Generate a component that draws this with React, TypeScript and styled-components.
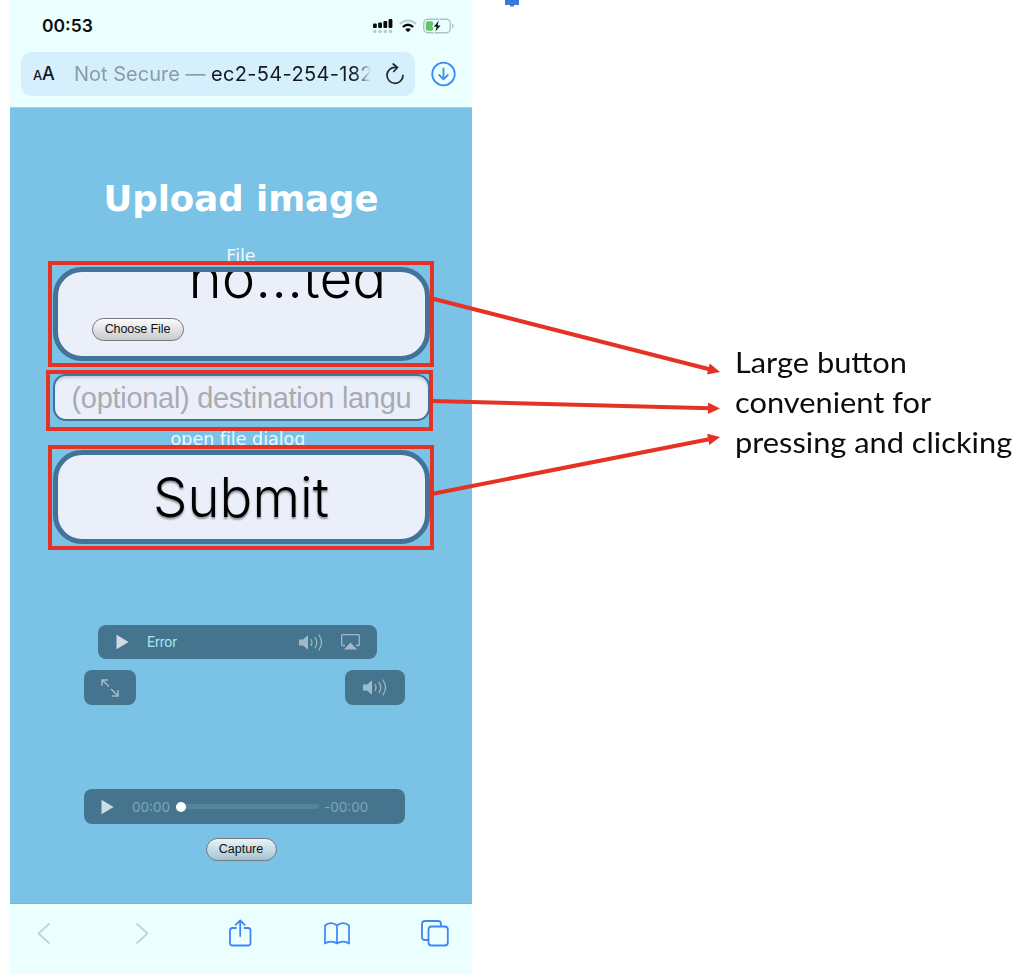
import React from "react";
import styled, { createGlobalStyle } from "styled-components";

const GlobalStyle = createGlobalStyle`
  *, *::before, *::after { box-sizing: border-box; }
  html, body { margin: 0; padding: 0; background: #fff; }
  svg { display: block; flex: none; }
`;

const Slide = styled.main`
  position: relative;
  display: flex;
  width: 1022px;
  height: 974px;
  padding-left: 10px;
  overflow: hidden;
  background: #fff;
  font-family: Inter, "Liberation Sans", sans-serif;
`;

const Phone = styled.section`
  display: flex;
  flex-direction: column;
  flex: none;
  width: 462px;
  height: 974px;
  background: #ebffff;
`;

const StatusBar = styled.div`
  display: flex;
  align-items: center;
  height: 52px;
  padding: 0 18px 0 32px;
`;

const Clock = styled.span`
  flex: 1;
  font: 600 17.5px/20px Inter, sans-serif;
  color: #0b0f10;
`;

const StatusIcons = styled.div`
  display: flex;
  align-items: center;
  gap: 6px;
  margin-top: -1px;
`;

const AddressRow = styled.div`
  display: flex;
  align-items: flex-start;
  height: 56px;
  padding: 0 15px 0 11px;
  border-bottom: 1px solid #a9cfdf;
`;

const AddressPill = styled.div`
  display: flex;
  align-items: center;
  width: 394px;
  height: 44px;
  margin-right: 16px;
  padding: 0 10px 0 12px;
  border-radius: 11px;
  background: #d6effd;
`;

const DownloadButton = styled.span`
  padding-top: 9px;
`;

const TextSize = styled.span`
  width: 41px;
  padding-top: 1px;
  font: 500 18px/24px Inter, sans-serif;
  letter-spacing: -0.2px;
  color: #15191b;
  small { font-size: 13px; }
`;

const Url = styled.span`
  width: 297px;
  margin-right: 14px;
  overflow: hidden;
  white-space: nowrap;
  font: 400 20px/28px Inter, sans-serif;
  letter-spacing: 0.32px;
  color: #15191b;
  -webkit-mask-image: linear-gradient(90deg, #000 calc(100% - 16px), transparent);
  mask-image: linear-gradient(90deg, #000 calc(100% - 16px), transparent);
  em { font-style: normal; letter-spacing: 0; color: #8a9ba4; }
`;

const Page = styled.div`
  display: flex;
  flex-direction: column;
  align-items: center;
  height: 795px;
  padding-top: 69px;
  background: #7ac2e6;
`;

const Title = styled.h1`
  margin: 0 0 24px;
  font: 700 35.5px/44px "DejaVu Sans", sans-serif;
  color: #fff;
`;

const Label = styled.div<{ $top?: number; $shift?: number }>`
  height: 22px;
  margin: ${p => p.$top ?? 0}px ${p => p.$shift ?? 0}px 0 0;
  font: 400 17.5px/22px "DejaVu Sans", sans-serif;
  font-variant-ligatures: none;
  color: #eef8fd;
`;

const Field = styled.div<{ $thin?: boolean }>`
  display: flex;
  width: 377px;
  height: ${p => (p.$thin ? 47 : 94)}px;
  overflow: hidden;
  border: ${p => (p.$thin ? "2px" : "5px")} solid #44739a;
  border-radius: ${p => (p.$thin ? 13 : 29)}px;
  background: #ebeff9;
`;

const FileField = styled(Field)`
  align-items: flex-start;
  padding-left: 34px;
`;

const FileName = styled.span`
  margin: -28px 0 0 5px;
  font: 300 56.5px/68px Inter, "Liberation Sans", sans-serif;
  color: #000;
`;

const LanguageField = styled(Field)`
  align-items: center;
  margin-top: 13px;
  padding-left: 17px;
  box-shadow: inset 0 3px 3px -1px #c3c9d8;
  font: 400 29px/40px "Liberation Sans", sans-serif;
  letter-spacing: -0.3px;
  white-space: nowrap;
  color: #a9abb0;
`;

const SubmitField = styled(Field)`
  align-items: center;
  justify-content: center;
  font: 300 54.5px/70px Inter, "Liberation Sans", sans-serif;
  color: #000;
  text-shadow: 0 2px 2px #0006;
`;

const PillButton = styled.button<{ $width: number; $tint?: boolean }>`
  width: ${p => p.$width}px;
  height: 23px;
  flex: none;
  padding: 0;
  border: 1.5px solid #74787c;
  border-radius: 12px;
  background: ${p => (p.$tint ? "linear-gradient(#e9f4f8, #a5c3d2)" : "linear-gradient(#fbfbfc, #c9cacd)")};
  font: 400 12.5px/19px "Liberation Sans", sans-serif;
  color: #101214;
`;

const ChooseButton = styled(PillButton)`
  margin-top: 46px;
  letter-spacing: -0.1px;
`;

const MediaBar = styled.div<{ $width: number }>`
  display: flex;
  align-items: center;
  width: ${p => p.$width}px;
  height: 35px;
  border-radius: 8px;
  background: #45758e;
  color: #a2b9c6;
`;

const ErrorBar = styled(MediaBar)`
  height: 34px;
  margin: 81px 7px 0 0;
  padding: 0 17px 0 18px;
  gap: 18px;
`;

const ErrorText = styled.span`
  flex: 1;
  font: 400 14px/18px Roboto, sans-serif;
  color: #a6e6ee;
`;

const MediaRow = styled.div`
  display: flex;
  justify-content: space-between;
  width: 321px;
  margin: 11px 0 84px 7px;
`;

const MediaButton = styled(MediaBar)`
  justify-content: center;
`;

const AudioBar = styled(MediaBar)`
  margin: 0 0 14px 7px;
  padding-left: 17px;
`;

const Time = styled.span<{ $gap?: number }>`
  width: 44px;
  margin-left: ${p => p.$gap ?? 0}px;
  font: 400 13.5px/18px Inter, sans-serif;
  color: #83a5b7;
`;

const Track = styled.div`
  display: flex;
  align-items: center;
  width: 143px;
  height: 5px;
  margin-right: 5px;
  border-radius: 3px;
  background: #55839b;
`;

const Knob = styled.i`
  width: 10px;
  height: 10px;
  border-radius: 50%;
  background: #fff;
`;

const Toolbar = styled.nav`
  display: flex;
  align-items: flex-start;
  justify-content: space-between;
  height: 71px;
  padding: 15px 23px 0 20px;
  border-top: 1px solid #79b3d1;
  color: #3e86f5;
`;

const ToolbarItem = styled.span`
  display: flex;
  justify-content: center;
  width: 28px;
`;

const Highlight = styled.div<{ $x: number; $y: number; $w: number; $h: number }>`
  position: absolute;
  left: ${p => p.$x}px;
  top: ${p => p.$y}px;
  width: ${p => p.$w}px;
  height: ${p => p.$h}px;
  border: 4px solid #e63224;
`;

const Arrows = styled.svg`
  position: absolute;
  left: 0;
  top: 0;
`;

const Note = styled.p`
  margin: 342px 0 0 263px;
  font: 400 29px/40px Lato, "Open Sans", sans-serif;
  white-space: nowrap;
  color: #0c0c0c;
`;

const NoteLine = styled.span`
  display: block;
  transform: scaleX(1.062);
  transform-origin: left;
`;

const PlayIcon = () => (
  <svg width="13" height="16" viewBox="0 0 13 16"><path d="M.5 .8 12.6 8 .5 15.2Z" fill="#d0dce4" /></svg>
);

const VolumeIcon = () => (
  <svg width="24" height="17" viewBox="0 0 24 17" fill="none" stroke="currentColor" strokeWidth="1.2" strokeLinecap="round">
    <path d="M0 5.5h4l5-4.3v14.6l-5-4.3H0Z" fill="currentColor" stroke="none" />
    <path d="M12 5.5q2 3 0 6M16 3.3q3.6 5.2 0 10.4M20 1q5 7.500 0 15" />
  </svg>
);

const AirplayIcon = () => (
  <svg width="19" height="16" viewBox="0 0 19 16" fill="none" stroke="currentColor" strokeWidth="1.3">
    <path d="M4 11.500H1.600Q.7 11.500 .7 10.600V1.600Q.7.700 1.600.700H17.400Q18.300.700 18.300 1.600V10.600Q18.300 11.500 17.400 11.500H15" />
    <path d="M9.500 8.500 16 15.500H3Z" fill="currentColor" stroke="none" />
  </svg>
);

const ArrowShape = ({ x1, y1, x2, y2 }: { x1: number; y1: number; x2: number; y2: number }) => {
  const length = Math.hypot(x2 - x1, y2 - y1);
  const angle = (Math.atan2(y2 - y1, x2 - x1) * 180) / Math.PI;
  return (
    <g transform={`translate(${x1} ${y1}) rotate(${angle})`} fill="#e63224">
      <path d={`M-1 -2H${length - 10}V2H-1Z`} />
      <path d={`M${length} 0 L${length - 12} -5.700V5.700Z`} />
    </g>
  );
};

export default function App() {
  return (
    <Slide>
      <GlobalStyle />
      <Phone>
        <StatusBar>
          <Clock>00:53</Clock>
          <StatusIcons>
            <svg width="20" height="16" viewBox="0 0 20 16">
              <g fill="#080b0c">
                <rect x="0" y="5.500" width="3.800" height="4.500" rx="1" />
                <rect x="5.200" y="4.500" width="3.800" height="5.500" rx="1" />
                <rect x="10.400" y="3" width="3.800" height="7" rx="1" />
                <rect x="15.600" y="1" width="3.800" height="9" rx="1" />
              </g>
              <g fill="#b5c9d1">
                <circle cx="1.800" cy="13.400" r="1.700" />
                <circle cx="7" cy="13.400" r="1.700" />
                <circle cx="12.300" cy="13.400" r="1.700" />
                <circle cx="17.500" cy="13.400" r="1.700" />
              </g>
            </svg>
            <svg width="18" height="14" viewBox="0 0 18 14" fill="none" strokeWidth="2.300">
              <path d="M1 4.800Q9-2 17 4.800" stroke="#b8ccd5" />
              <path d="M3.800 8Q9 3.500 14.200 8" stroke="#050708" />
              <path d="M6.200 10.400Q9 8.200 11.800 10.400L9 13.300Z" fill="#050708" />
            </svg>
            <svg width="31" height="16" viewBox="0 0 31 16">
              <rect x=".8" y="1.300" width="26.500" height="13.400" rx="4" fill="none" stroke="#aebfc5" strokeWidth="1.400" />
              <path d="M29 5.500v5q1.700-.8 1.700-2.500T29 5.500Z" fill="#aebfc5" />
              <rect x="2.800" y="3.200" width="7.500" height="9.600" rx="1.800" fill="#62c466" />
              <path d="M17.500 0 8.500 9h4l-2.500 7L20 7h-4Z" fill="#ebffff" />
              <path d="M15.800 2.800 10.700 8.700h3l-1.300 4.700 5.200-6h-3.100Z" fill="#0b0f10" />
            </svg>
          </StatusIcons>
        </StatusBar>
        <AddressRow>
          <AddressPill>
            <TextSize><small>A</small>A</TextSize>
            <Url><em>Not Secure — </em>ec2-54-254-182</Url>
            <svg width="20" height="22" viewBox="0 0 20 22" fill="none" stroke="#202629" strokeWidth="1.700" strokeLinecap="round" strokeLinejoin="round">
              <path d="M10.500 4.300A8 8 0 1 0 18 12.300M8.200 1 12.500 4.500 8.800 8.500" />
            </svg>
          </AddressPill>
          <DownloadButton>
            <svg width="26" height="26" viewBox="0 0 26 26" fill="none" stroke="#3e8bfa" strokeWidth="1.800" strokeLinecap="round" strokeLinejoin="round">
              <circle cx="12.500" cy="13" r="11.300" />
              <path d="M12.500 7.500V18M8.200 14l4.300 4.300 4.300-4.300" />
            </svg>
          </DownloadButton>
        </AddressRow>
        <Page>
          <Title>Upload image</Title>
          <Label>File</Label>
          <FileField>
            <ChooseButton $width={92}>Choose File</ChooseButton>
            <FileName>no…ted</FileName>
          </FileField>
          <LanguageField $thin>(optional) destination langu</LanguageField>
          <Label $top={7} $shift={6}>open file dialog</Label>
          <SubmitField>Submit</SubmitField>
          <ErrorBar $width={279}>
            <PlayIcon />
            <ErrorText>Error</ErrorText>
            <VolumeIcon />
            <AirplayIcon />
          </ErrorBar>
          <MediaRow>
            <MediaButton $width={52}>
              <svg width="18" height="18" viewBox="0 0 18 18" fill="none" stroke="currentColor" strokeWidth="1.500">
                <path d="M8 7.500 1.200 1M1 6.800V.9H7M10 10l6.800 6.700M17 11v6h-6" />
              </svg>
            </MediaButton>
            <MediaButton $width={60}><VolumeIcon /></MediaButton>
          </MediaRow>
          <AudioBar $width={321}>
            <PlayIcon />
            <Time $gap={18}>00:00</Time>
            <Track><Knob /></Track>
            <Time>-00:00</Time>
          </AudioBar>
          <PillButton $width={71} $tint>Capture</PillButton>
        </Page>
        <Toolbar>
          <ToolbarItem>
            <svg width="14" height="30" viewBox="0 0 14 30" fill="none" stroke="#c0d3db" strokeWidth="1.800" strokeLinecap="round" strokeLinejoin="round"><path d="M12 5 1.500 14.500 12 24" /></svg>
          </ToolbarItem>
          <ToolbarItem>
            <svg width="14" height="30" viewBox="0 0 14 30" fill="none" stroke="#c0d3db" strokeWidth="1.800" strokeLinecap="round" strokeLinejoin="round"><path d="M2 5 12.500 14.500 2 24" /></svg>
          </ToolbarItem>
          <ToolbarItem>
            <svg width="24" height="30" viewBox="0 0 24 30" fill="none" stroke="currentColor" strokeWidth="1.800" strokeLinecap="round" strokeLinejoin="round">
              <path d="M8 9H4.500Q2 9 2 11.500V24Q2 26.500 4.500 26.500H20Q22.500 26.500 22.500 24V11.500Q22.500 9 20 9H16.500M12.200 17V2M7.700 5.800 12.200 1.500 16.700 5.800" />
            </svg>
          </ToolbarItem>
          <ToolbarItem>
            <svg width="26" height="30" viewBox="0 0 26 30" fill="none" stroke="currentColor" strokeWidth="1.700" strokeLinejoin="round">
              <path d="M13 6.500Q10.500 4.200 7 4.200Q3.500 4.200 1 6.500V24.500Q3.500 22.700 7 22.700Q10.500 22.700 13 24.500Q15.500 22.700 19 22.700Q22.500 22.700 25 24.500V6.500Q22.500 4.200 19 4.200Q15.500 4.200 13 6.500V24.500" />
            </svg>
          </ToolbarItem>
          <ToolbarItem>
            <svg width="28" height="30" viewBox="0 0 28 30" fill="none" stroke="currentColor" strokeWidth="1.800">
              <path d="M7 21H4Q1 21 1 18V5Q1 2 4 2H17Q20 2 20 5V7.500" />
              <rect x="7.500" y="7.500" width="19.300" height="19" rx="3" />
            </svg>
          </ToolbarItem>
        </Toolbar>
      </Phone>
      <Note>
        <NoteLine>Large button</NoteLine>
        <NoteLine>convenient for</NoteLine>
        <NoteLine>pressing and clicking</NoteLine>
      </Note>
      <Highlight $x={48} $y={261} $w={386} $h={106} />
      <Highlight $x={46} $y={370} $w={387} $h={61} />
      <Highlight $x={48} $y={445} $w={386} $h={105} />
      <Arrows width="1022" height="974" viewBox="0 0 1022 974">
        <path d="M505 0h14v5h-5v1.500h-4V5h-5Z" fill="#3a78dc" />
        <ArrowShape x1={434} y1={299} x2={720} y2={372} />
        <ArrowShape x1={433} y1={401} x2={720} y2={408.5} />
        <ArrowShape x1={434} y1={493.5} x2={720} y2={437} />
      </Arrows>
    </Slide>
  );
}
